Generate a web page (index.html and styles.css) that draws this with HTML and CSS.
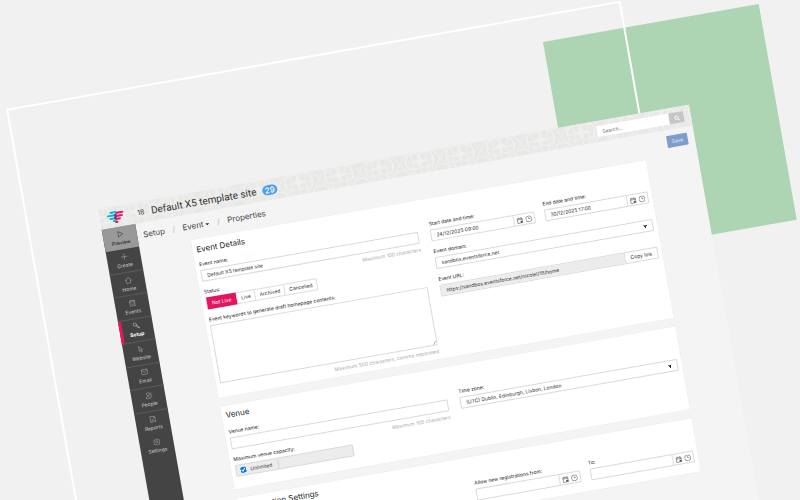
FILE: index.html
```html
<!DOCTYPE html>
<html lang="en">
<head>
<meta charset="utf-8">
<title>Properties</title>
<link rel="stylesheet" href="styles.css">
</head>
<body>
<svg class="sprite" aria-hidden="true">
  <symbol id="cal" viewBox="0 0 14 14"><path d="M2 3h10v9.500H2zM2 5.500h10M4.500 1v2M9.500 1v2"/><path d="M8.500 9h2.500v2.500h-2.500z" fill="currentColor"/></symbol>
  <symbol id="clock" viewBox="0 0 14 14"><circle cx="7" cy="7" r="6"/><path d="M7 3.500V7h3"/></symbol>
</svg>
<div class="scene">
  <div class="block"></div>
  <div class="outline"></div>
  <div class="app">
    <header class="top">
      <svg class="pattern" aria-hidden="true">
        <defs>
          <pattern id="lace" x="18" width="41" height="42" patternUnits="userSpaceOnUse">
            <g fill="none" stroke="#f5f5f3" stroke-width=".7">
              <circle cx="20" cy="9" r="14"/>
              <circle cx="20" cy="2" r="8"/><circle cx="20" cy="15" r="8"/>
              <circle cx="14" cy="8" r="8"/><circle cx="26" cy="8" r="8"/>
              <path d="M6 9h28M20 -5v28"/>
              <path d="M0 9C4 14 6 18 10 24M41 9c-4 5-6 9-10 15M0 9C3 5 5 2 8 -2M41 9c-3-4-5-7-8-11"/>
              <circle cx="0" cy="24" r="9"/><circle cx="41" cy="24" r="9"/>
            </g>
          </pattern>
        </defs>
        <rect width="100%" height="100%" fill="url(#lace)"/>
      </svg>
      <svg class="logo" viewBox="0 0 36 28" fill="none" stroke-width="4" stroke-linecap="round" aria-label="Logo">
        <path d="M9 4h10M3 10h13M7 16h10M13 21h4" stroke="#14b4d8"/>
        <path d="M21 6h12M17 12h14M18 18h8M17 24h3" stroke="#e9175f"/>
        <path d="M17 10l3-2M16 16l3-2" stroke="#3b3f7c" stroke-width="3"/>
      </svg>
      <span class="number">18</span>
      <h1>Default X5 template site</h1>
      <span class="badge">29</span>
      <form class="search">
        <input type="text" placeholder="Search..." aria-label="Search">
        <button type="button" aria-label="Search"><svg viewBox="0 0 14 14"><circle cx="6" cy="6" r="4"/><path d="M9 9l4 4"/></svg></button>
      </form>
    </header>
    <div class="body">
      <nav class="side">
        <a class="preview" href="#"><svg viewBox="0 0 14 14"><path d="M3 1.500l9 5.500-9 5.500z"/></svg>Preview</a>
        <a href="#"><svg viewBox="0 0 14 14"><path d="M7 0v14M0 7h14"/></svg>Create</a>
        <a href="#"><svg viewBox="0 0 14 14"><path d="M1 7l6-6 6 6h-2v6H3V7z"/></svg>Home</a>
        <a href="#"><svg viewBox="0 0 14 14"><path d="M2 2h10v11H2zM2 5h10M5 0v3M9 0v3M5 9l2 2 3-3"/></svg>Events</a>
        <a class="active" href="#"><svg viewBox="0 0 14 14"><path d="M2 2l3-1 3 3-1 2 6 6-1 1-6-6-2 1-3-3z"/></svg>Setup</a>
        <a href="#"><svg viewBox="0 0 14 14"><path d="M4 1l7 7H8l2 4-2 1-2-4-2 2z"/></svg>Website</a>
        <a href="#"><svg viewBox="0 0 14 14"><path d="M1 2h12v10H1zM1 3l6 5 6-5"/></svg>Email</a>
        <a href="#"><svg viewBox="0 0 14 14"><circle cx="6" cy="4" r="3"/><path d="M1 13c0-6 10-6 10 0zM10 2c3 0 3 4 1 5 2 1 3 3 3 5"/></svg>People</a>
        <a class="plain" href="#"><svg viewBox="0 0 14 14"><path d="M2 1h7l3 3v9H2zM9 1v3h3M5 11V8M7 11V6M9 11V9"/></svg>Reports</a>
        <a class="plain" href="#"><svg viewBox="0 0 14 14"><circle cx="7" cy="7" r="2"/><path d="M7 1l2 2 3 0 0 3 2 1-2 2v3H9l-2 2-2-2H2V9L0 7l2-1V3h3z"/></svg>Settings</a>
      </nav>
      <main>
        <div class="bar">
          <div class="crumbs"><a href="#">Setup</a><i>/</i><a href="#">Event <b></b></a><i>/</i><span>Properties</span></div>
          <button class="save" type="button">Save</button>
        </div>
        <section class="card details">
          <h2>Event Details</h2>
          <div class="cols">
            <div class="col">
              <div class="field"><label for="name">Event name:</label><input class="box" id="name" type="text" value="Default X5 template site"><small>Maximum 100 characters</small></div>
              <div class="field status"><span class="label">Status:</span><div class="group"><button class="on" type="button">Not Live</button><button type="button">Live</button><button type="button">Archived</button><button type="button">Cancelled</button></div></div>
              <div class="field"><label for="keys">Event keywords to generate draft homepage contents:</label><textarea class="box" id="keys"></textarea><small>Maximum 500 characters, comma separated</small></div>
            </div>
            <div class="col">
              <div class="pair">
                <div class="field"><label for="start">Start date and time:</label><div class="date box"><input id="start" type="text" value="24/12/2025 09:00"><span><svg><use href="#cal"/></svg><svg><use href="#clock"/></svg></span></div></div>
                <div class="field"><label for="end">End date and time:</label><div class="date box"><input id="end" type="text" value="30/12/2025 17:00"><span><svg><use href="#cal"/></svg><svg><use href="#clock"/></svg></span></div></div>
              </div>
              <div class="field"><label for="domain">Event domain:</label><select class="box" id="domain"><option>sandbox.eventsforce.net</option></select></div>
              <div class="field"><label for="url">Event URL:</label><div class="url box"><input id="url" type="text" readonly value="https://sandbox.eventsforce.net/nicolel/18/home"><button type="button">Copy link</button></div></div>
            </div>
          </div>
        </section>
        <section class="card venue">
          <h2>Venue</h2>
          <div class="cols">
            <div class="col">
              <div class="field"><label for="venue">Venue name:</label><input class="box" id="venue" type="text"><small>Maximum 100 characters</small></div>
              <div class="field capacity"><label for="cap">Maximum venue capacity:</label><div class="cap box"><label class="tick"><input type="checkbox" checked>Unlimited</label><input id="cap" type="text" disabled></div></div>
            </div>
            <div class="col">
              <div class="field"><label for="zone">Time zone:</label><select class="box" id="zone"><option>(UTC) Dublin, Edinburgh, Lisbon, London</option></select></div>
            </div>
          </div>
        </section>
        <section class="card">
          <h2>Registration Settings</h2>
          <div class="cols">
            <div class="col"></div>
            <div class="col">
              <div class="pair">
                <div class="field"><label for="from">Allow new registrations from:</label><div class="date box"><input id="from" type="text"><span><svg><use href="#cal"/></svg><svg><use href="#clock"/></svg></span></div></div>
                <div class="field"><label for="to">To:</label><div class="date box"><input id="to" type="text"><span><svg><use href="#cal"/></svg><svg><use href="#clock"/></svg></span></div></div>
              </div>
            </div>
          </div>
        </section>
      </main>
    </div>
  </div>
</div>
</body>
</html>
```
FILE: styles.css
```css
* { box-sizing: border-box; }
body { margin: 0; background: #f1f1f1; color: #333; font: 5px/6px Inter, "Liberation Sans", sans-serif; overflow: hidden; }
a { color: inherit; text-decoration: none; }
button, input, select, textarea { font: inherit; color: inherit; margin: 0; padding: 0; border: 0; background: none; border-radius: 0; min-width: 0; }
h1, h2 { margin: 0; font-weight: 400; }
svg { fill: none; stroke: currentColor; }
.sprite { position: absolute; width: 0; height: 0; }

.scene { position: relative; height: 100vh; overflow: hidden; }
.block, .outline { position: absolute; transform: rotate(-10deg); transform-origin: 0 0; }
.block { left: 543px; top: 42px; width: 219px; height: 219px; background: #add5b4; }
.outline { left: 6px; top: 109px; width: 624px; height: 600px; border: 2px solid #fff; }
.app { position: relative; width: 75%; min-height: 560px; margin: 209px 0 0 98px; background: #f4f4f4; transform: rotate(-10deg); transform-origin: 0 0; display: flex; flex-direction: column; }

.top { position: relative; height: 21px; display: flex; align-items: center; padding: 0 7px 0 7px; background: #e8e8e7; }
.top > * { position: relative; }
.top .pattern { position: absolute; inset: 0; width: 100%; height: 100%; stroke: none; }
.logo { width: 18px; height: 14px; stroke: none; }
.number { margin-left: 13px; width: 14px; font-size: 7px; }
h1 { font-family: Roboto, Inter, sans-serif; font-size: 10px; line-height: 12px; }
.badge { margin-left: 6px; width: 15px; height: 10px; border-radius: 5px; background: #4a9fea; color: #fff; font-size: 8px; font-weight: 500; line-height: 10px; text-align: center; }
.search { margin-left: auto; width: 88px; height: 11px; display: flex; background: #fff; }
.search input { flex: 1; padding-left: 5px; }
.search input::placeholder { color: #777; opacity: 1; }
.search button { width: 15px; background: #c6c6c6; color: #fff; display: grid; place-items: center; }
.search svg { width: 6px; height: 6px; stroke-width: 2; }

.body { flex: 1; display: flex; }
.side { width: 34px; background: #444; color: #ccc; display: grid; grid-template-rows: repeat(10, 4.35%); }
.side a { display: flex; flex-direction: column; align-items: center; justify-content: center; gap: 2px; border-bottom: 1px solid #5c5c5c; }
.side svg { width: 7px; height: 7px; opacity: .8; }
.side .preview { background: #999; color: #111; border: 0; }
.side .active { color: #fff; font-weight: 700; border-left: 3px solid #ec1563; padding-right: 3px; }
.side .plain { border: 0; }

main { flex: 1; min-width: 0; padding: 0 7px 0 6px; }
.bar { height: 25px; display: flex; justify-content: space-between; padding-top: 6px; }
.crumbs { display: flex; font-size: 8px; line-height: 12px; color: #444; }
.crumbs i { font-style: normal; color: #bbb; width: 18px; text-align: center; }
.crumbs b { display: inline-block; border: 1px solid transparent; border-top-color: #333; border-width: 2px 2px 0; vertical-align: middle; }
.save { width: 21px; height: 12px; border-radius: 1px; background: #7f9dcb; color: #e4ebf5; }

.card { margin: 0 44px 7px 45px; background: #fff; padding: 5px; outline: 1px solid #efefef; outline-offset: -1px; }
.details { height: 162px; padding-top: 6px; }
.venue { height: 86px; }
h2 { font-size: 8px; line-height: 10px; color: #222; padding-bottom: 8px; }
.details h2 { padding-bottom: 6px; }
.cols { display: grid; grid-template-columns: repeat(2, minmax(0, 1fr)); gap: 12px; }
.pair { display: grid; grid-template-columns: repeat(2, minmax(0, 1fr)); gap: 10px; }
.field { display: grid; grid-template-columns: minmax(0, 1fr); min-height: 28px; align-content: start; }
.field > label, .label { height: 10px; line-height: 8px; color: #222; white-space: nowrap; }
.box { width: 100%; height: 12px; border: 1px solid #dadada; border-radius: 1px; background: #fff; }
input.box, select.box, .date input, .url input { padding: 0 5px; }
small { font-size: 5px; height: 6px; line-height: 12px; text-align: right; color: #adadad; }
.group { display: flex; width: 113px; height: 12px; border: 1px solid #ddd; border-radius: 1px; }
.group button { flex: 1 0 auto; padding: 0 4px; border-left: 1px solid #ddd; }
.group .on { background: #e6145f; color: #fff; margin: -1px 0; border: 0; padding: 0 5px; }
textarea.box { height: 59px; resize: none; display: block; background: #fff linear-gradient(135deg, transparent 50%, #bbb 50%, #bbb 65%, #fff 65%) no-repeat right bottom / 4px 4px; }
select.box { appearance: none; background: #fff conic-gradient(from -35deg at 50% 100%, #333 70deg, transparent 0) no-repeat right 5px center / 4px 3px; }
.date, .url, .cap { display: flex; }
.date input, .url input { flex: 1; }
.date span { width: 21px; border-left: 1px solid #ddd; display: flex; align-items: center; justify-content: space-evenly; color: #444; }
.date svg { width: 7px; height: 7px; }
.url input { background: #ececec; }
.url button { width: 33px; border-left: 1px solid #ddd; }
.cap { width: 120px; background: #ececec; }
.tick { width: 43px; border-right: 1px solid #d6d6d6; display: flex; align-items: center; gap: 4px; padding-left: 4px; color: #444; }
.tick input { width: 6px; height: 6px; }
.cap > input { flex: 1; }
```
